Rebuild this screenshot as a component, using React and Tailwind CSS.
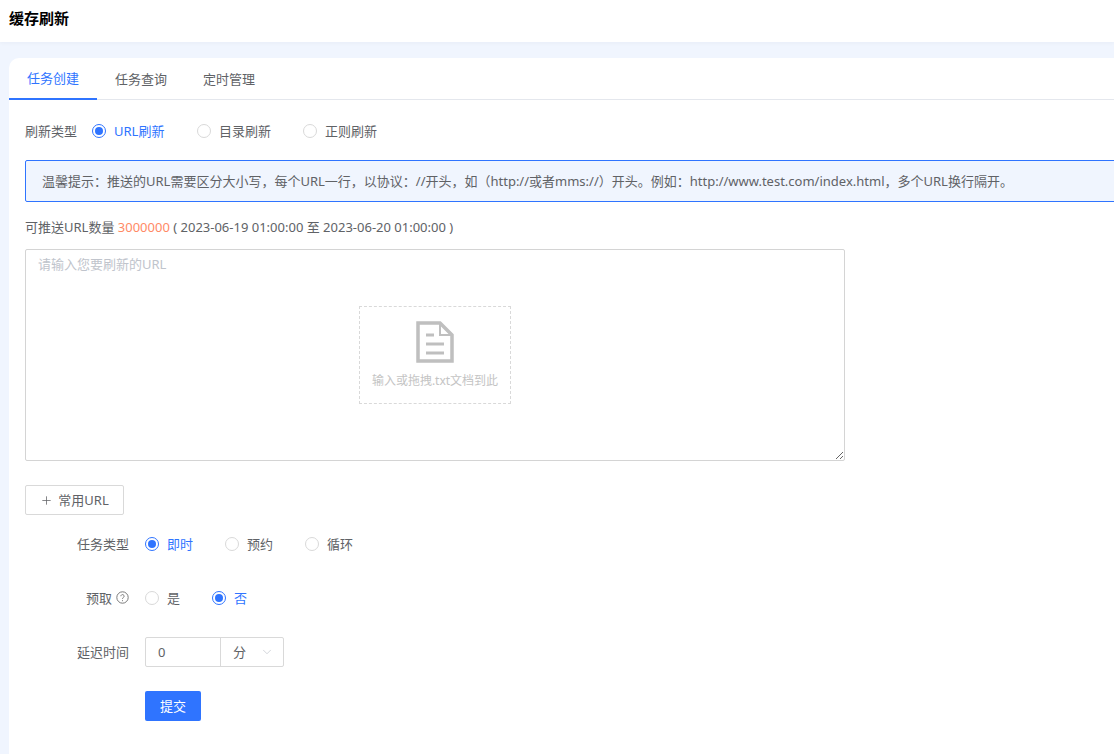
import React from 'react';
import { Plus, ChevronDown } from 'lucide-react';

const font = "font-['Noto_Sans','Noto_Sans_CJK_SC',sans-serif]";

const Radio = ({ label, checked, className = '' }) => (
  <label className={`flex items-center ${className}`}>
    <span
      className={`flex h-[14px] w-[14px] items-center justify-center rounded-full border bg-white ${
        checked ? 'border-[#2f74ff]' : 'border-[#d9d9d9]'
      }`}
    >
      {checked && <span className="h-[8px] w-[8px] rounded-full bg-[#2f74ff]"></span>}
    </span>
    <span className={`ml-[8px] ${checked ? 'text-[#2f74ff]' : 'text-[#606266]'}`}>{label}</span>
  </label>
);

const FormRow = ({ label, children, className = '' }) => (
  <div className={`flex items-center ${className}`}>
    <div className="flex w-[104px] items-center justify-end text-[#606266]">{label}</div>
    <div className="ml-[16px] flex items-center">{children}</div>
  </div>
);

const FileIcon = () => (
  <svg width="38" height="42" viewBox="0 0 38 42" fill="none" stroke="#bfbfbf" strokeWidth="3.5">
    <path d="M2 2h22l12 12v26H2z" />
    <path d="M24 2v12h12" strokeWidth="2" />
    <path d="M10 14h8M10 23h18M10 32h18" strokeWidth="3" />
  </svg>
);

const HelpIcon = () => (
  <svg width="13" height="13" viewBox="0 0 13 13" fill="none" stroke="#7a7a7a" className="ml-[4px] mb-[1px]">
    <circle cx="6.5" cy="6.5" r="5.7" />
    <path d="M4.9 5.2a1.6 1.6 0 1 1 2.5 1.3c-.6.4-.9.6-.9 1.3" />
    <path d="M6.5 9.2v1" />
  </svg>
);

export default function App() {
  return (
    <div className={`h-[754px] w-[1114px] overflow-hidden bg-[#f0f5fe] text-[13px] leading-[18px] text-[#606266] ${font}`}>
      {/* Header */}
      <div className="flex h-[42px] items-start bg-white pl-[9px] pt-[7px] shadow-[0_1px_4px_rgba(0,21,41,0.04)]">
        <h1 className="text-[15px] font-bold leading-[22px] text-black">缓存刷新</h1>
      </div>

      <div className="ml-[9px] mt-[16px] h-[696px] w-[1130px] rounded-tl-[10px] bg-white">
        {/* Tabs */}
        <div className="flex h-[42px] items-stretch border-b border-[#e4e7ed]">
          <div className="flex h-[42px] w-[88px] items-center justify-center border-b-2 border-[#2f74ff] text-[#2f74ff]">任务创建</div>
          <div className="flex h-[42px] w-[88px] items-center justify-center text-[#606266]">任务查询</div>
          <div className="flex h-[42px] w-[88px] items-center justify-center text-[#606266]">定时管理</div>
        </div>

        <div className="pl-[16px]">
          {/* Refresh type */}
          <div className="mt-[21px] flex h-[20px] items-center">
            <span className="mb-[1px] w-[67px]">刷新类型</span>
            <Radio label="URL刷新" checked className="w-[105px]" />
            <Radio label="目录刷新" className="w-[106px]" />
            <Radio label="正则刷新" />
          </div>

          {/* Notice */}
          <div className="mt-[19px] flex h-[42px] w-[1105px] items-center rounded-[2px] border border-[#2f74ff] bg-[#f0f5fe] pl-[16px]">
            温馨提示：推送的URL需要区分大小写，每个URL一行，以协议：//开头，如（http://或者mms://）开头。例如：http://www.test.com/index.html，多个URL换行隔开。
          </div>

          {/* Quota */}
          <p className="mt-[16px]">
            可推送URL数量 <span className="text-[#ff8a65]">3000000</span> ( 2023-06-19 01:00:00 至 2023-06-20 01:00:00 )
          </p>

          {/* URL input */}
          <div className="relative mt-[13px] h-[212px] w-[820px]">
            <textarea
              className="block h-full w-full resize-y rounded-[2px] border border-[#d4d4d4] px-[12px] py-[5px] text-[13px] leading-[18px] outline-none placeholder:text-[#c0c4cc]"
              placeholder="请输入您要刷新的URL"
            ></textarea>
            <div className="absolute left-[334px] top-[57px] flex h-[98px] w-[152px] flex-col items-center border border-dashed border-[#d9d9d9] pt-[14px]">
              <FileIcon />
              <span className="mt-[10px] text-[12px] leading-[16px] text-[#c4c4c4]">输入或拖拽.txt文档到此</span>
            </div>
          </div>

          <button className="mt-[24px] flex h-[30px] w-[99px] items-center justify-center rounded-[2px] border border-[#d9d9d9] bg-white text-[#606266]">
            <Plus size={13} strokeWidth={1.4} />
            <span className="ml-[5px]">常用URL</span>
          </button>

          {/* Task options */}
          <FormRow label="任务类型" className="mt-[19px] h-[20px]">
            <Radio label="即时" checked className="w-[80px]" />
            <Radio label="预约" className="w-[80px]" />
            <Radio label="循环" />
          </FormRow>

          <FormRow
            label={
              <>
                预取
                <HelpIcon />
              </>
            }
            className="mt-[34px] h-[20px]"
          >
            <Radio label="是" className="w-[67px]" />
            <Radio label="否" checked />
          </FormRow>

          <FormRow label="延迟时间" className="mt-[29px] h-[30px]">
            <div className="flex h-[30px] w-[139px] rounded-[2px] border border-[#d9d9d9] bg-white">
              <div className="flex w-[75px] items-center border-r border-[#d9d9d9] pl-[12px]">0</div>
              <div className="flex flex-1 items-center pl-[12px]">
                分
                <ChevronDown size={14} strokeWidth={1.2} className="ml-[14px] text-[#c0c4cc]" />
              </div>
            </div>
          </FormRow>

          <button className="ml-[120px] mt-[24px] block h-[30px] w-[56px] rounded-[2px] bg-[#2f74ff] text-white">提交</button>
        </div>
      </div>
    </div>
  );
}
